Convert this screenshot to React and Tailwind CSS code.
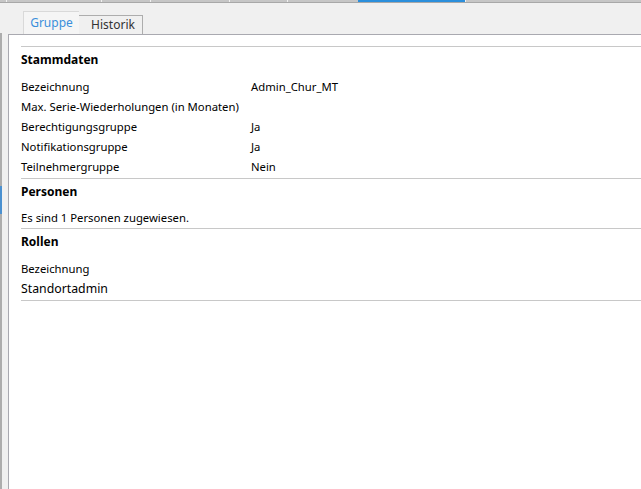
import React from "react";

const font = { fontFamily: '"Noto Sans", "Open Sans", sans-serif' };

function Row({ label, value, h = "h-[20px]" }) {
  return (
    <div className={`flex ${h} items-center text-[11.3px] text-black`}>
      <div className="w-[230px] whitespace-nowrap">{label}</div>
      <div className="whitespace-nowrap">{value}</div>
    </div>
  );
}

function Heading({ children }) {
  return (
    <div className="h-[30px] pt-[3px] text-[12px] font-bold leading-[20px] text-black">
      {children}
    </div>
  );
}

export default function App() {
  return (
    <div
      className="relative flex h-[489px] w-[641px] flex-col overflow-hidden bg-[#f0f0f0]"
      style={font}
    >
      {/* top strip */}
      <div className="flex h-[3px] shrink-0 border-b border-[#a8a8a8] bg-[#c6c6c6]">
        <div className="w-[7px] border-r border-[#f0f0f0]" />
        <div className="w-[95px] border-r border-[#f0f0f0]" />
        <div className="w-[49px] border-r border-[#f0f0f0]" />
        <div className="w-[79px] border-r border-[#f0f0f0]" />
        <div className="w-[58px] border-r border-[#f0f0f0]" />
        <div className="w-[70px]" />
        <div className="w-[108px] border-r border-[#f0f0f0] bg-[#2b8fdc]" />
        <div className="flex-1" />
      </div>

      <div className="flex flex-1">
        {/* left strip */}
        <div className="flex w-[8px] shrink-0 flex-col">
          <div className="h-[30px]" />
          <div className="relative flex-1 border-l-2 border-[#adadad]">
            <div className="absolute left-[-2px] top-[153px] h-[28px] w-[2px] bg-[#4a90d0]" />
          </div>
        </div>

        {/* main */}
        <div className="flex flex-1 flex-col">
          {/* tabs */}
          <div className="flex h-[31px] items-end pl-[15px]">
            <div className="flex h-[23px] w-[56px] items-center justify-center border-l border-t border-[#d9d9d9] bg-[#f5f5f5] text-[12px] text-[#3a8fdb]">
              Gruppe
            </div>
            <div className="flex h-[19px] w-[64px] items-center justify-center border-r border-t border-[#adadad] bg-[#f0f0f0] pl-[5px] text-[12px] text-[#333]">
              Historik
            </div>
          </div>

          {/* panel */}
          <div className="flex flex-1 flex-col border-l border-t border-[#a9a9b0] bg-white pl-[12px]">
            <div className="mt-[11px] border-t border-[#c8c8c8]" />
            <Heading>Stammdaten</Heading>
            <div className="mb-[1px]">
              <Row label="Bezeichnung" value="Admin_Chur_MT" />
              <Row label="Max. Serie-Wiederholungen (in Monaten)" value="" />
              <Row label="Berechtigungsgruppe" value="Ja" />
              <Row label="Notifikationsgruppe" value="Ja" />
              <Row label="Teilnehmergruppe" value="Nein" />
            </div>
            <div className="border-t border-[#c8c8c8]" />
            <Heading>Personen</Heading>
            <Row label="Es sind 1 Personen zugewiesen." value="" h="h-[19px]" />
            <div className="border-t border-[#c8c8c8]" />
            <Heading>Rollen</Heading>
            <div>
              <Row label="Bezeichnung" value="" />
              <div className="flex h-[21px] items-center text-[12.3px] text-black">
                Standortadmin
              </div>
            </div>
            <div className="border-t border-[#c8c8c8]" />
          </div>
        </div>
      </div>
    </div>
  );
}
